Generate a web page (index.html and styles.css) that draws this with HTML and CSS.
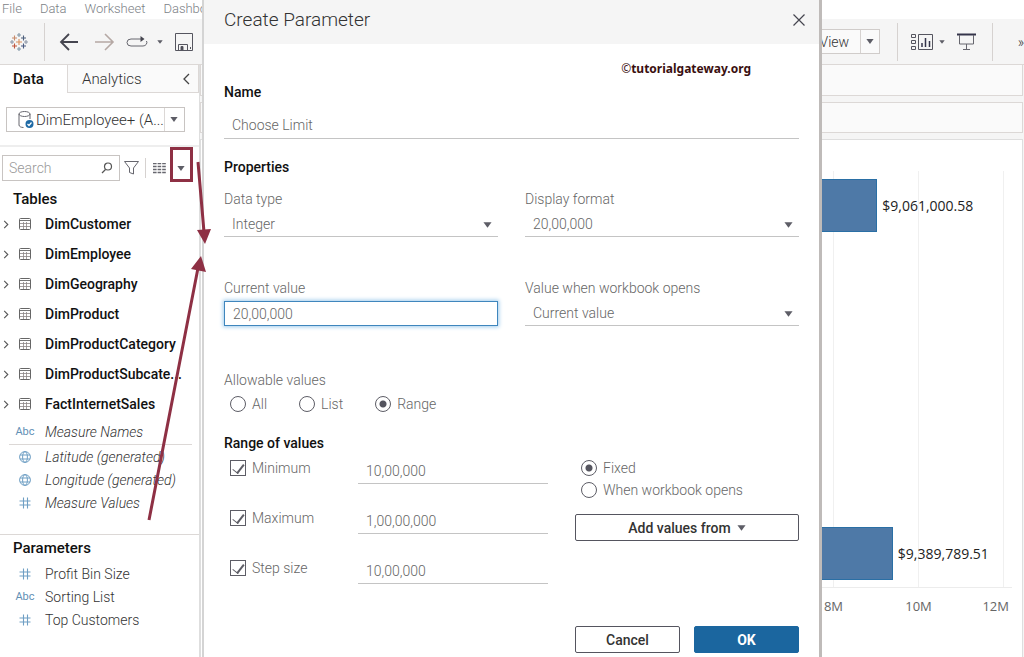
FILE: index.html
```html
<!DOCTYPE html>
<html lang="en">
<head>
  <meta charset="UTF-8">
  <meta name="viewport" content="width=device-width, initial-scale=1.0">
  <title>Create Parameter</title>
  <link rel="stylesheet" href="styles.css">
</head>
<body>

  <!-- Shared icons -->
  <svg class="sprite">
    <symbol id="caret" viewBox="0 0 10 6"><path d="M0.5 0h9L5 6z" fill="#5d5d66"/></symbol>
    <symbol id="chevron" viewBox="0 0 6 10"><path d="M1 1l4 4-4 4" fill="none" stroke="#555" stroke-width="1.2"/></symbol>
    <symbol id="table" viewBox="0 0 12 12">
      <rect x="0.5" y="0.5" width="11" height="11" rx="1" fill="none" stroke="#666"/>
      <path d="M1 2.5h10" stroke="#777"/>
      <path d="M1 5.5h10M1 8.5h10M4.5 4v7M7.5 4v7" stroke="#8b8585" stroke-width="0.8"/>
    </symbol>
    <symbol id="globe" viewBox="0 0 12 12">
      <g fill="none" stroke="#6f9fc4">
        <circle cx="6" cy="6" r="5.4"/>
        <ellipse cx="6" cy="6" rx="2.4" ry="5.4"/>
        <path d="M1 4h10M1 8h10"/>
      </g>
    </symbol>
    <symbol id="hash" viewBox="0 0 12 12"><path d="M4.5 0.5v11M8.5 0.5v11M0.5 4h11M0.5 8h11" stroke="#6f9fc4" stroke-width="1.1"/></symbol>
  </svg>

  <!-- Menu bar -->
  <nav class="menu-bar">
    <a href="#">File</a>
    <a href="#">Data</a>
    <a href="#">Worksheet</a>
    <a href="#">Dashboard</a>
  </nav>

  <!-- Toolbar -->
  <div class="toolbar">
    <div class="toolbar-left">
      <button class="tool logo" aria-label="Start page">
        <svg width="18" height="18" viewBox="0 0 18 18" fill="none" stroke-width="1.1">
          <path d="M9 6v6M6 9h6" stroke="#d98f5c"/>
          <path d="M4.5 2.5v5M2 5h5" stroke="#c78a6a"/>
          <path d="M13.5 2.5v5M11 5h5" stroke="#4d5f7c"/>
          <path d="M4.5 10.5v5M2 13h5" stroke="#c0563e"/>
          <path d="M13.5 10.5v5M11 13h5" stroke="#4a5a80"/>
          <path d="M9 0v4M7 2h4M9 14v4M7 16h4" stroke="#8096a6"/>
          <path d="M2 7v4M0 9h4M16 7v4M14 9h4" stroke="#8d97a8"/>
        </svg>
      </button>
      <span class="divider"></span>
      <button class="tool back" aria-label="Back">
        <svg width="20" height="18" viewBox="0 0 20 18"><path d="M10 1L2 9l8 8M2 9h17" fill="none" stroke="#45454f" stroke-width="1.8"/></svg>
      </button>
      <button class="tool forward" aria-label="Forward">
        <svg width="20" height="18" viewBox="0 0 20 18"><path d="M10 1l8 8-8 8M18 9H0" fill="none" stroke="#b5a8a4" stroke-width="1.6"/></svg>
      </button>
      <button class="tool replay" aria-label="Replay">
        <svg width="22" height="12" viewBox="0 0 22 12">
          <path d="M16 3H5a4 3.5 0 0 0 0 7h12a4 3.5 0 0 0 3.5-5" fill="none" stroke="#66666e"/>
          <path d="M14.5 0l4 3-4 3z" fill="#45454f"/>
        </svg>
        <svg class="small-caret" width="6" height="4"><use href="#caret"/></svg>
      </button>
      <button class="tool" aria-label="Save">
        <svg width="18" height="18" viewBox="0 0 18 18" fill="none" stroke="#55555f">
          <path d="M0.5 0.5h17v17h-17zM3.5 17v-5.5h9V17"/>
          <path d="M6 13.5h2V17H6z" fill="#45454f"/>
          <path d="M15.5 14v2"/>
        </svg>
      </button>
    </div>
    <div class="toolbar-right">
      <div class="pick fit">
        <select aria-label="Fit"><option>Entire View</option></select>
        <svg width="8" height="5"><use href="#caret"/></svg>
      </div>
      <span class="divider"></span>
      <button class="tool cards" aria-label="Show cards">
        <svg width="22" height="16" viewBox="0 0 22 16" fill="none" stroke="#55555f">
          <path d="M0.5 0.5h4v3h-4zM0.5 6.5h4v3h-4zM0.5 12.5h4v3h-4zM7.5 0.5h14v15h-14z"/>
          <path d="M11 13V9M14.5 13V4M18.5 13V7" stroke="#34344a" stroke-width="1.5"/>
        </svg>
        <svg class="small-caret" width="6" height="4"><use href="#caret"/></svg>
      </button>
      <button class="tool present" aria-label="Presentation mode">
        <svg width="19" height="17" viewBox="0 0 19 17" fill="none" stroke="#66666e">
          <path d="M0 1.5h19" stroke="#34344a" stroke-width="2"/>
          <path d="M2.5 2v9h14V2M9.5 11v5M6 16.5h7"/>
        </svg>
      </button>
      <span class="divider"></span>
      <button class="tool more" aria-label="More">»</button>
    </div>
  </div>

  <div class="main">
    <!-- Data pane -->
    <aside class="side">
      <div class="tabs">
        <button class="tab active">Data</button>
        <button class="tab">Analytics
          <svg width="7" height="12" viewBox="0 0 7 12"><path d="M6 1L1 6l5 5" fill="none" stroke="#444" stroke-width="1.3"/></svg>
        </button>
      </div>

      <div class="source">
        <button class="source-box">
          <svg width="16" height="18" viewBox="0 0 16 18">
            <g fill="none" stroke="#66666e">
              <ellipse cx="6.5" cy="3" rx="5.5" ry="2.5"/>
              <path d="M1 3v11c0 1.5 2 2.5 4.5 2.5M12 3v5"/>
            </g>
            <circle cx="11.5" cy="13" r="4" fill="#1f6aa5"/>
            <path d="M9.5 13l1.5 1.5 2.5-3" fill="none" stroke="#fff" stroke-width="1.2"/>
          </svg>
          <span class="source-name">DimEmployee+ (A...</span>
          <span class="source-caret"><svg width="8" height="5"><use href="#caret"/></svg></span>
        </button>
      </div>

      <div class="search-row">
        <div class="search">
          <input type="text" aria-label="Search" placeholder="Search">
          <svg width="12" height="12" viewBox="0 0 12 12" fill="none" stroke="#555" stroke-width="1.2"><circle cx="7" cy="4.5" r="3.5"/><path d="M4.5 7.5L1 11"/></svg>
        </div>
        <button class="tool filter" aria-label="Filter">
          <svg width="15" height="14" viewBox="0 0 15 14"><path d="M0.5 0.5h14l-5 6.5v6l-4-1.5V7z" fill="none" stroke="#66666e"/></svg>
        </button>
        <span class="divider"></span>
        <button class="tool view-as" aria-label="View data">
          <svg width="13" height="11" viewBox="0 0 13 11"><path d="M0 0.5h13M0 3.5h13M0 6.5h13M0 9.5h13" stroke="#66666e" stroke-width="1.4" stroke-dasharray="3.6 1"/></svg>
        </button>
        <button class="tool" aria-label="Data pane menu">
          <svg width="8" height="5"><use href="#caret"/></svg>
        </button>
      </div>

      <h2 class="side-title">Tables</h2>
      <ul class="tables">
        <li><svg width="6" height="9"><use href="#chevron"/></svg><svg width="12" height="12"><use href="#table"/></svg><span>DimCustomer</span></li>
        <li><svg width="6" height="9"><use href="#chevron"/></svg><svg width="12" height="12"><use href="#table"/></svg><span>DimEmployee</span></li>
        <li><svg width="6" height="9"><use href="#chevron"/></svg><svg width="12" height="12"><use href="#table"/></svg><span>DimGeography</span></li>
        <li><svg width="6" height="9"><use href="#chevron"/></svg><svg width="12" height="12"><use href="#table"/></svg><span>DimProduct</span></li>
        <li><svg width="6" height="9"><use href="#chevron"/></svg><svg width="12" height="12"><use href="#table"/></svg><span>DimProductCategory</span></li>
        <li><svg width="6" height="9"><use href="#chevron"/></svg><svg width="12" height="12"><use href="#table"/></svg><span>DimProductSubcate...</span></li>
        <li><svg width="6" height="9"><use href="#chevron"/></svg><svg width="12" height="12"><use href="#table"/></svg><span>FactInternetSales</span></li>
      </ul>

      <ul class="fields generated dimensions">
        <li><span class="type">Abc</span>Measure Names</li>
      </ul>
      <ul class="fields generated measures">
        <li><span class="type"><svg width="12" height="12"><use href="#globe"/></svg></span>Latitude (generated)</li>
        <li><span class="type"><svg width="12" height="12"><use href="#globe"/></svg></span>Longitude (generated)</li>
        <li><span class="type"><svg width="12" height="12"><use href="#hash"/></svg></span>Measure Values</li>
      </ul>

      <div class="parameters">
        <h2 class="side-title">Parameters</h2>
        <ul class="fields">
          <li><span class="type"><svg width="12" height="12"><use href="#hash"/></svg></span>Profit Bin Size</li>
          <li><span class="type">Abc</span>Sorting List</li>
          <li><span class="type"><svg width="12" height="12"><use href="#hash"/></svg></span>Top Customers</li>
        </ul>
      </div>
    </aside>

    <!-- Worksheet -->
    <section class="sheet">
      <div class="shelf"></div>
      <div class="shelf"></div>
      <div class="canvas">
        <div class="plot">
          <div class="grid-lines"><i></i><i></i><i></i><i></i><i></i><i></i></div>
          <div class="bars">
            <div class="bar-row"><div class="bar" style="width: 74%"></div><span>$9,061,000.58</span></div>
            <div class="bar-row"><div class="bar" style="width: 77%"></div><span>$9,389,789.51</span></div>
          </div>
        </div>
        <div class="ticks"><span>8M</span><span>10M</span><span>12M</span></div>
      </div>
    </section>
  </div>

  <!-- Create Parameter dialog -->
  <form class="dialog" role="dialog" aria-labelledby="dialogTitle">
    <header class="dialog-header">
      <h1 id="dialogTitle">Create Parameter</h1>
      <button type="button" class="tool" aria-label="Close">
        <svg width="12" height="12" viewBox="0 0 12 12"><path d="M0.5 0.5l11 11M11.5 0.5l-11 11" stroke="#45454f" stroke-width="1.2"/></svg>
      </button>
    </header>

    <div class="dialog-body">
      <p class="credit"><span>©</span>tutorialgateway.org</p>

      <label class="heading" for="paramName">Name</label>
      <input type="text" class="line-input name-input" id="paramName" value="Choose Limit">

      <h3 class="heading properties">Properties</h3>
      <div class="pair">
        <div class="field">
          <label for="dataType">Data type</label>
          <div class="pick">
            <select id="dataType"><option>Integer</option></select>
            <svg width="9" height="6"><use href="#caret"/></svg>
          </div>
        </div>
        <div class="field">
          <label for="displayFormat">Display format</label>
          <div class="pick">
            <select id="displayFormat"><option>20,00,000</option></select>
            <svg width="9" height="6"><use href="#caret"/></svg>
          </div>
        </div>
        <div class="field">
          <label for="currentValue">Current value</label>
          <input type="text" class="focused" id="currentValue" value="20,00,000">
        </div>
        <div class="field">
          <label for="openValue">Value when workbook opens</label>
          <div class="pick">
            <select id="openValue"><option>Current value</option></select>
            <svg width="9" height="6"><use href="#caret"/></svg>
          </div>
        </div>
      </div>

      <fieldset class="allowable">
        <legend>Allowable values</legend>
        <div class="choices">
          <label><input type="radio" name="allowable">All</label>
          <label><input type="radio" name="allowable">List</label>
          <label><input type="radio" name="allowable" checked>Range</label>
        </div>
      </fieldset>

      <h3 class="heading">Range of values</h3>
      <div class="range">
        <div class="limits">
          <div class="limit">
            <label><input type="checkbox" checked>Minimum</label>
            <input type="text" class="line-input" aria-label="Minimum value" value="10,00,000">
          </div>
          <div class="limit">
            <label><input type="checkbox" checked>Maximum</label>
            <input type="text" class="line-input" aria-label="Maximum value" value="1,00,00,000">
          </div>
          <div class="limit">
            <label><input type="checkbox" checked>Step size</label>
            <input type="text" class="line-input" aria-label="Step size value" value="10,00,000">
          </div>
        </div>
        <div class="range-source">
          <label><input type="radio" name="source" checked>Fixed</label>
          <label><input type="radio" name="source">When workbook opens</label>
          <button type="button" class="btn">Add values from <svg width="9" height="6"><use href="#caret"/></svg></button>
        </div>
      </div>

      <div class="actions">
        <button type="button" class="btn">Cancel</button>
        <button type="button" class="btn primary">OK</button>
      </div>
    </div>
  </form>

  <!-- Red arrows pointing from the menu and the parameters to the dialog -->
  <svg class="marks" width="220" height="540" viewBox="0 0 220 540">
    <rect x="171.5" y="148.5" width="20" height="32" fill="none" stroke="#8e3044" stroke-width="3"/>
    <path d="M198 162l6 70M149 520l49-252" stroke="#8e3044" stroke-width="3" fill="none"/>
    <path d="M197 230l14-1-6 15zM201 256l5 16-15-3z" fill="#8e3044"/>
  </svg>

</body>
</html>
```

FILE: styles.css
```css
* {
  box-sizing: border-box;
}

body {
  margin: 0;
  height: 100vh;
  display: flex;
  flex-direction: column;
  position: relative;
  overflow: hidden;
  font-family: Roboto, "Open Sans", sans-serif;
  font-size: 14px;
  font-weight: 300;
  line-height: 20px;
  color: #333;
  background-color: #fff;
}

h1, h2, h3, p, ul {
  margin: 0;
  padding: 0;
  font-weight: 300;
}

ul {
  list-style-type: none;
}

button, input, select {
  font: inherit;
  color: inherit;
  margin: 0;
}

svg {
  flex-shrink: 0;
}

.sprite {
  display: none;
}

/* Menu bar */
.menu-bar {
  display: flex;
  gap: 18px;
  width: 202px;
  height: 19px;
  padding-left: 2px;
  overflow: hidden;
  font-size: 13px;
  line-height: 17px;
}

.menu-bar a {
  color: #7d8287;
  text-decoration: none;
}

/* Toolbar */
.toolbar {
  display: flex;
  justify-content: space-between;
  height: 46px;
  background-color: #f5f5f5;
  border-bottom: 1px solid #dcd8d6;
}

.toolbar-left,
.toolbar-right {
  display: flex;
  align-items: center;
}

.toolbar-left {
  padding-left: 10px;
}

.tool {
  display: flex;
  align-items: center;
  padding: 0;
  border: none;
  background: none;
  cursor: pointer;
}

.divider {
  width: 1px;
  height: 38px;
  background-color: #d6d2d0;
}

.logo {
  margin-right: 16px;
}

.back {
  margin: 0 16px 0 14px;
}

.forward {
  margin-right: 11px;
}

.replay {
  gap: 9px;
  margin-right: 12px;
}

.cards {
  gap: 6px;
  margin: 0 12px 0 13px;
}

.present {
  margin-right: 16px;
}

.more {
  width: 31px;
  justify-content: flex-end;
}

/* Drop-downs: the arrow shares the cell with the select */
.pick {
  display: grid;
  align-items: center;
}

.pick select,
.pick svg {
  grid-area: 1 / 1;
}

.pick svg {
  justify-self: end;
  margin-right: 6px;
  pointer-events: none;
}

.pick select {
  appearance: none;
  width: 100%;
  height: 25px;
  padding: 0 24px 0 8px;
  border: none;
  border-bottom: 1px solid #c4c4c4;
  border-radius: 0;
  background: none;
}

.fit {
  width: 112px;
  margin-right: 17px;
  background: linear-gradient(#d6d2d0, #d6d2d0) right 19px center / 1px 100% no-repeat #fafafa;
}

.fit select {
  border: 1px solid #d0ccca;
  padding-left: 12px;
}

/* Data pane */
.main {
  display: flex;
  flex: 1;
  min-height: 0;
}

.side {
  width: 200px;
  flex-shrink: 0;
  border-right: 1px solid #dedede;
}

.tabs {
  display: flex;
  height: 28px;
}

.tab {
  display: flex;
  align-items: center;
  justify-content: space-between;
  flex: 1;
  padding: 0 8px 0 14px;
  border: 1px solid #dcd8d6;
  border-top: none;
  background-color: #fafafa;
  font-size: 15px;
}

.tab.active {
  flex: 0 0 67px;
  padding-left: 13px;
  border: none;
  background-color: #fff;
  font-weight: 500;
  color: #111;
}

.source {
  padding: 14px 14px 13px 6px;
  border-bottom: 2px solid #eee;
}

.source-box {
  display: flex;
  align-items: center;
  width: 100%;
  height: 25px;
  padding: 0 0 0 11px;
  border: 1px solid #c8c4c2;
  background-color: #fff;
  font-size: 15px;
}

.source-name {
  flex: 1;
  min-width: 0;
  padding-left: 2px;
  text-align: left;
  white-space: nowrap;
}

.source-caret {
  display: flex;
  align-items: center;
  height: 100%;
  padding: 0 6px 0 5px;
  border-left: 1px solid #dcd8d6;
}

.search-row {
  display: flex;
  align-items: center;
  padding: 8px 0 0 2px;
}

.search {
  display: flex;
  align-items: center;
  width: 118px;
  height: 26px;
  padding: 0 6px;
  border: 1px solid #c8c4c2;
}

.search input {
  width: 100%;
  padding: 0;
  border: none;
  outline: none;
}

.search input::placeholder {
  color: #999;
}

.filter {
  margin: 0 6px 0 4px;
}

.search-row .divider {
  height: 20px;
}

.view-as {
  margin: 0 11px 0 7px;
}

.side-title {
  padding: 8px 0 0 13px;
  font-size: 15px;
  font-weight: 500;
  color: #111;
}

.tables li {
  display: flex;
  align-items: center;
  height: 30px;
  padding-left: 3px;
  font-weight: 500;
  color: #111;
  white-space: nowrap;
}

.tables svg + svg {
  margin: 0 14px 0 10px;
}

.fields li {
  display: flex;
  align-items: center;
  height: 23px;
}

.type {
  display: flex;
  justify-content: center;
  width: 20px;
  margin: 0 10px 0 15px;
  font-size: 11px;
  font-style: normal;
  font-weight: 400;
  color: #5f8fb5;
}

.generated {
  font-style: italic;
}

.dimensions {
  margin: 0 7px 0 9px;
  padding: 1px 0;
  border-bottom: 1px solid #dcd8d6;
}

.dimensions .type {
  margin-left: 6px;
}

.parameters {
  margin-top: 20px;
  border-top: 1px solid #dcd8d6;
}

.parameters .side-title {
  padding: 3px 0 4px 13px;
}

/* Worksheet */
.sheet {
  display: flex;
  flex-direction: column;
  flex: 1;
  gap: 6px;
  padding-right: 1px;
  background-color: #f5f5f5;
}

.shelf {
  height: 31px;
  border: 1px solid #dcd8d6;
  background-color: #fafafa;
}

.shelf:first-child {
  border-top: none;
}

.canvas {
  display: flex;
  flex-direction: column;
  flex: 1;
  padding: 31px 10px 0 293px;
  border: 1px solid #dedede;
  border-bottom: none;
  background-color: #fff;
}

.plot {
  display: grid;
  flex: 1;
  border-bottom: 1px solid #ececec;
}

.grid-lines,
.bars {
  grid-area: 1 / 1;
}

.grid-lines {
  display: flex;
}

.grid-lines i {
  width: 85px;
  border-right: 1px solid #f0f0f0;
}

.bars {
  display: flex;
  flex-direction: column;
  justify-content: space-between;
  padding: 8px 0 7px;
}

.bar-row {
  display: flex;
  align-items: center;
  gap: 5px;
  font-family: "Open Sans", "Noto Sans", sans-serif;
  font-weight: 400;
  color: #222;
}

.bar {
  flex-shrink: 0;
  height: 53px;
  background-color: #4e79a7;
  border: 1px solid #2a6fa5;
}

.ticks {
  display: flex;
  justify-content: flex-end;
  height: 69px;
  padding: 8px 3px 0 0;
  font-family: "Open Sans", "Noto Sans", sans-serif;
  font-size: 13px;
  font-weight: 400;
  color: #666;
}

.ticks span {
  width: 85px;
  text-align: center;
}

.ticks span:last-child {
  width: 48px;
  text-align: right;
}

/* Dialog */
.dialog {
  position: absolute;
  top: 0;
  bottom: 0;
  left: 202px;
  right: 202px;
  border-left: 2px solid #d4d4d4;
  border-right: 3px solid #bfbbb9;
  background-color: #fff;
  color: #666;
}

.dialog-header {
  display: flex;
  align-items: center;
  justify-content: space-between;
  height: 44px;
  padding: 0 14px 5px 20px;
  background-color: #f5f5f5;
}

.dialog-header h1 {
  font-size: 19px;
  color: #333;
}

.dialog-body {
  padding: 15px 20px 0;
}

.credit {
  padding-right: 48px;
  text-align: right;
  font-family: "Noto Sans", sans-serif;
  font-size: 12px;
  font-weight: 700;
  color: #3a0f0f;
}

.credit span {
  font-weight: 400;
}

.heading {
  display: block;
  font-size: 14px;
  font-weight: 500;
  color: #111;
}

.credit + .heading {
  margin-top: 3px;
}

.line-input {
  width: 100%;
  height: 27px;
  padding: 0 8px;
  border: none;
  border-bottom: 1px solid #c4c4c4;
  background: none;
}

.name-input {
  margin-top: 10px;
}

.properties {
  margin: 18px 0 12px;
}

.pair {
  display: grid;
  grid-template-columns: 1fr 1fr;
  gap: 41px 27px;
}

.field {
  display: flex;
  flex-direction: column;
  gap: 3px;
}

.focused {
  width: 100%;
  height: 25px;
  padding: 0 8px;
  border: 1px solid #3f86bd;
  outline: none;
  box-shadow: 0 0 4px 1px #9fcbec;
}

.allowable {
  margin: 0;
  padding: 44px 0 0;
  border: none;
}

.allowable legend {
  float: left;
  width: 100%;
  padding: 0;
}

.choices {
  display: flex;
  gap: 32px;
  clear: both;
  padding: 4px 0 19px 6px;
}

.choices label,
.limit label,
.range-source label {
  display: flex;
  align-items: center;
  gap: 6px;
}

input[type="radio"],
input[type="checkbox"] {
  appearance: none;
  flex-shrink: 0;
  width: 16px;
  height: 16px;
  border: 1px solid #5d5d66;
  background-color: #fff;
}

input[type="radio"] {
  border-radius: 50%;
}

input[type="radio"]:checked {
  background-image: radial-gradient(circle, #55555f 3px, transparent 4px);
}

input[type="checkbox"] {
  display: grid;
  place-items: center;
}

input[type="checkbox"]:checked::before {
  content: "";
  width: 5px;
  height: 10px;
  margin-bottom: 2px;
  border: solid #5d5d66;
  border-width: 0 2px 1px 0;
  transform: rotate(38deg);
}

.range {
  display: grid;
  grid-template-columns: 1fr 224px;
  gap: 27px;
}

.limits {
  display: grid;
  gap: 19px;
}

.limit {
  display: flex;
  align-items: flex-start;
  justify-content: space-between;
  padding: 5px 0 0 6px;
}

.limit .line-input {
  width: 190px;
  height: 26px;
}

.range-source {
  display: flex;
  flex-direction: column;
  gap: 2px;
  padding-top: 5px;
}

.range-source label {
  padding-left: 6px;
}

.btn {
  display: flex;
  align-items: center;
  justify-content: center;
  gap: 6px;
  height: 27px;
  padding: 0;
  border: 1px solid #55555f;
  border-radius: 2px;
  background-color: #fff;
  color: #333;
  font-weight: 500;
}

.range-source .btn {
  margin-top: 12px;
}

.actions {
  display: flex;
  justify-content: flex-end;
  gap: 14px;
  margin-top: 42px;
}

.actions .btn {
  width: 105px;
}

.actions .primary {
  border-color: #1b669f;
  background-color: #1b669f;
  color: #fff;
  font-weight: 700;
}

.marks {
  position: absolute;
  top: 0;
  left: 0;
  pointer-events: none;
}
```
